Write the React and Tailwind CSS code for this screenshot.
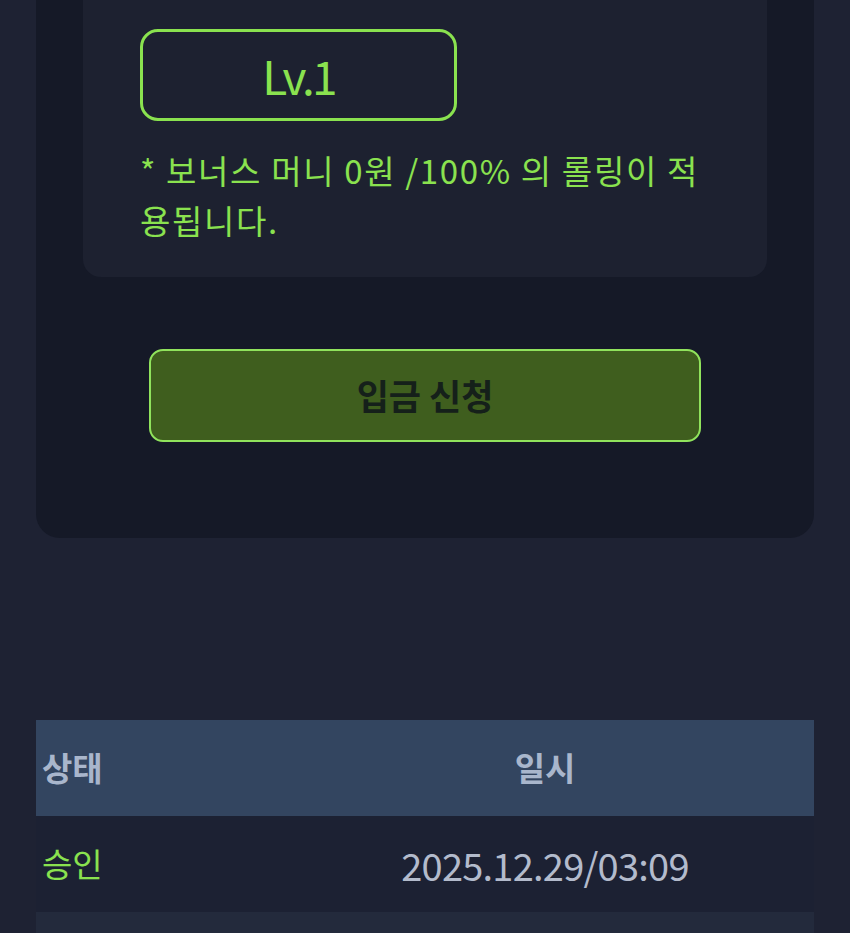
import React from "react";

const rows = [
  { status: "승인", date: "2025.12.29/03:09" },
  { status: "", date: "" },
];

function App() {
  return (
    <div
      className="min-h-[933px] bg-[#1e2233] px-[36px]"
      style={{ fontFamily: '"Noto Sans CJK KR", "Noto Sans", sans-serif' }}
    >
      {/* Deposit card */}
      <div className="rounded-b-[24px] bg-[#151927] px-[47px] pb-[96px]">
        <div className="rounded-b-[18px] bg-[#1d2130] px-[57px] pt-[29px] pb-[32px]">
          <div className="flex h-[92px] w-[317px] items-center justify-center rounded-[18px] border-[3px] border-[#8ae24f]">
            <span className="text-[46px] leading-none tracking-[-0.06em] text-[#8ae24f]">
              Lv.1
            </span>
          </div>
          <p className="mt-[24px] max-w-[575px] text-[33px] leading-[50px] tracking-[0.05em] text-[#8ae24f]">
            * 보너스 머니 0원 /100% 의 롤링이 적용됩니다.
          </p>
        </div>

        <div className="mt-[72px] flex justify-center">
          <button className="flex h-[93px] w-[552px] items-center justify-center rounded-[14px] border-2 border-[#90e35c] bg-[#3f5e1e] text-[35px] font-bold text-[#15201a]">
            입금 신청
          </button>
        </div>
      </div>

      {/* History table */}
      <div className="mt-[182px]">
        <div className="flex h-[96px] items-center bg-[#334560] text-[33px] font-bold text-[#a9b6cc]">
          <div className="w-[240px] pl-[6px]">상태</div>
          <div className="flex-1 text-center">일시</div>
        </div>
        {rows.map((row, i) => (
          <div
            key={i}
            className={
              i % 2 === 0
                ? "flex h-[96px] items-center bg-[#1c2133] text-[33px]"
                : "flex h-[96px] items-center bg-[#232a3c] text-[33px]"
            }
          >
            <div className="w-[240px] pl-[6px] text-[#8ae24f]">{row.status}</div>
            <div className="flex-1 text-center text-[38px] tracking-[-0.02em] text-[#b3bbcc]">
              {row.date}
            </div>
          </div>
        ))}
      </div>
    </div>
  );
}

export default App;
